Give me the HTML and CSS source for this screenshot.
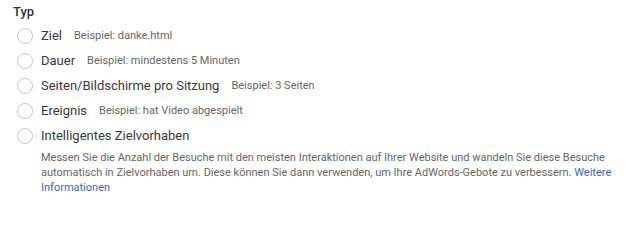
FILE: index.html
```html
<!DOCTYPE html>
<html lang="de">
<head>
<meta charset="utf-8">
<link rel="stylesheet" href="styles.css">
</head>
<body>
<div class="panel">
  <div class="title">Typ</div>
  <div class="options">
    <label class="option"><span class="radio"></span><span class="label">Ziel</span><span class="hint">Beispiel: danke.html</span></label>
    <label class="option"><span class="radio"></span><span class="label">Dauer</span><span class="hint">Beispiel: mindestens 5 Minuten</span></label>
    <label class="option"><span class="radio"></span><span class="label">Seiten/Bildschirme pro Sitzung</span><span class="hint">Beispiel: 3 Seiten</span></label>
    <label class="option"><span class="radio"></span><span class="label">Ereignis</span><span class="hint">Beispiel: hat Video abgespielt</span></label>
    <label class="option"><span class="radio"></span><span class="label">Intelligentes Zielvorhaben</span></label>
    <p class="desc">Messen Sie die Anzahl der Besuche mit den meisten Interaktionen auf Ihrer Website und wandeln Sie diese Besuche automatisch in Zielvorhaben um. Diese können Sie dann verwenden, um Ihre AdWords-Gebote zu verbessern. <a class="link" href="#">Weitere Informationen</a></p>
  </div>
</div>
</body>
</html>
```
FILE: styles.css
```css
html, body {
  margin: 0;
  padding: 0;
  background: #ffffff;
}
body {
  font-family: Roboto, "Liberation Sans", Arial, sans-serif;
  color: #333333;
}
.panel {
  padding: 3px 18px 0 13px;
}
.title {
  font-size: 13px;
  font-weight: 500;
  line-height: 18px;
  color: #333333;
  margin-bottom: 2px;
}
.options {
  padding-left: 4px;
}
.option {
  display: flex;
  align-items: center;
  height: 25px;
  cursor: pointer;
}
.radio {
  width: 14px;
  height: 14px;
  border: 1px solid #c8c8c8;
  border-radius: 50%;
  box-sizing: content-box;
  flex: none;
  margin-right: 8px;
}
.label {
  font-size: 13px;
  color: #3a3a3a;
}
.hint {
  font-size: 11px;
  color: #666666;
  margin-left: 12px;
}
.desc {
  margin: 2px 0 0 24px;
  font-size: 11px;
  line-height: 15px;
  color: #666666;
}
.link {
  color: #3367d6;
  text-decoration: none;
}
```
